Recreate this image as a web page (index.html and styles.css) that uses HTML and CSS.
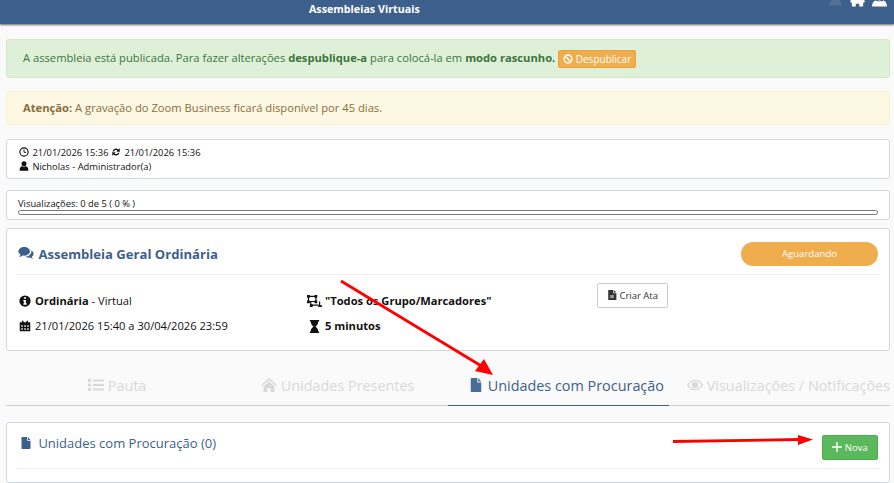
FILE: index.html
```html
<!DOCTYPE html>
<html lang="pt-BR">
<head>
<meta charset="utf-8">
<title>Assembleias Virtuais</title>
<link rel="stylesheet" href="styles.css">
</head>
<body>
<header class="topbar">
  <div class="topbar-title">Assembleias Virtuais</div>
  <div class="topbar-icons">
    <svg class="ti dim" viewBox="0 0 16 16"><path d="M8 1l7.500 14H.5z"/></svg>
    <svg class="ti" viewBox="0 0 16 16"><path d="M8 5l8 5-1 2h-1v4H9.800v-3H6.200v3H2v-4H1l-1-2z"/></svg>
    <svg class="ti" viewBox="0 0 16 16"><circle cx="8" cy="5.500" r="4"/><path d="M0 16c0-4 2-6 4-6.500 2 1.300 6 1.300 8 0 2 .5 4 2.500 4 6.500z"/></svg>
  </div>
</header>
<main class="page">
  <div class="alert alert-ok">A assembleia está publicada. Para fazer alterações <b>despublique-a</b> para colocá-la em <b>modo rascunho.</b> <button class="btn-unpub"><svg class="i10" viewBox="0 0 16 16"><circle cx="8" cy="8" r="6.300" fill="none" stroke="#fff" stroke-width="2.300"/><path d="M3.500 3.500l9 9" stroke="#fff" stroke-width="2.300"/></svg> Despublicar</button></div>
  <div class="alert alert-warn"><b>Atenção:</b> A gravação do Zoom Business ficará disponível por 45 dias.</div>

  <section class="card meta">
    <div class="meta-row"><svg class="i10 meta-icon" viewBox="0 0 16 16"><circle cx="8" cy="8" r="6.600" fill="none" stroke="#111" stroke-width="1.800"/><path d="M8 4v4.500h3.500" fill="none" stroke="#111" stroke-width="1.500"/></svg> 21/01/2026 15:36 <svg class="i10 meta-icon" viewBox="0 0 16 16"><path d="M2.500 7a5.700 5.700 0 0 1 9.500-3l2-2v5.500H8.500l2-2A3.600 3.600 0 0 0 4.800 7zM13.500 9a5.700 5.700 0 0 1-9.500 3l-2 2V8.500h5.500l-2 2a3.600 3.600 0 0 0 5.700-1.500z" fill="#111"/></svg> 21/01/2026 15:36</div>
    <div class="meta-row"><svg class="i10 meta-icon" viewBox="0 0 16 16"><circle cx="8" cy="4.500" r="4"/><path d="M1 15.500c0-5 2-7 4-7 1 1 5 1 6 0 2 0 4 2 4 7z"/></svg> Nicholas - Administrador(a)</div>
  </section>

  <section class="card views">
    <div class="views-label">Visualizações: 0 de 5 ( 0 % )</div>
    <div class="progress"></div>
  </section>

  <section class="card assembly">
    <div class="assembly-head">
      <h1 class="assembly-title"><svg class="i16 title-icon" viewBox="0 0 18 16"><path d="M7 1c3.600 0 6.500 2.300 6.500 5S10.600 11 7 11c-.7 0-1.300-.1-1.900-.2C4 11.700 2.700 12.300 1.200 12.500c.8-.8 1.300-1.700 1.500-2.800C1.100 8.800.300 7.500.300 6 .3 3.300 3.400 1 7 1z"/><path d="M14.700 4.800c1.800.8 3 2.300 3 4 0 1.300-.7 2.500-2 3.300.2 1 .7 1.900 1.400 2.600-1.300-.2-2.500-.7-3.500-1.500-.5.100-1.100.2-1.600.2-1.600 0-3-.5-4.100-1.300 4 .100 7.300-2.500 7.300-6 0-.4-.2-.8-.5-1.300z"/></svg> Assembleia Geral Ordinária</h1>
      <span class="status">Aguardando</span>
    </div>
    <div class="assembly-body">
      <div class="facts">
        <div class="fact"><svg class="i12" viewBox="0 0 16 16"><circle cx="8" cy="8" r="7.500" fill="#111"/><path d="M6.500 3h3v2h-3zM5.800 6.500h3.400V11h1v2H5.800v-2h1V8.500h-1z" fill="#fff"/></svg> <span><b>Ordinária</b> - Virtual</span></div>
        <div class="fact"><svg class="i12" viewBox="0 0 16 16"><path d="M1 3h3V1h2v2h4V1h2v2h3v12H1z" fill="#111"/><path d="M3 7h2v2H3zM7 7h2v2H7zM11 7h2v2h-2zM3 11h2v2H3zM7 11h2v2H7zM11 11h2v2h-2z" fill="#fff"/></svg> <span>21/01/2026 15:40 a 30/04/2026 23:59</span></div>
      </div>
      <div class="facts facts-b">
        <div class="fact"><svg class="i14" viewBox="0 0 16 14"><path d="M1.500 1.500h8v5.500h-8zM4 7v4h8.500M13.500 7v5" fill="none" stroke="#111" stroke-width="1.300"/><path d="M0 0h3v3H0zM8 0h3v3H8zM0 6h3v3H0zM8 6h3v3H8zM3 10h3v3H3zM12 11h4v2h-4z"/></svg> <b>"Todos os Grupo/Marcadores"</b></div>
        <div class="fact"><svg class="i14" viewBox="0 0 16 14"><path d="M3 0h10v1.500h-1C12 5 10 6 9 7c1 1 3 2 3 5.500h1V14H3v-1.500h1C4 9 6 8 7 7 6 6 4 5 4 1.500H3z"/></svg> <b>5 minutos</b></div>
      </div>
      <button class="btn-ata"><svg class="i10" viewBox="0 0 14 16"><path d="M1 0h8v5h5v11H1z"/><path d="M10 0l4 4h-4z"/><path d="M4 8h6v5H4z" fill="#999"/></svg> Criar Ata</button>
    </div>
  </section>

  <nav class="tabs">
    <a class="tab tab-1"><svg class="i16" viewBox="0 0 16 14"><path d="M0 1h3v3H0zM0 5.500h3v3H0zM0 10h3v3H0zM5 1.500h11v2H5zM5 6h11v2H5zM5 10.500h11v2H5z"/></svg> Pauta</a>
    <a class="tab tab-2"><svg class="i16" viewBox="0 0 16 14"><path d="M8 0l8 7-1 1-7-6-7 6-1-1zM2.500 8.200L8 3.500l5.500 4.700V14H9.500v-4h-3v4h-4z"/></svg> Unidades Presentes</a>
    <a class="tab tab-3 active"><svg class="i16" viewBox="0 0 12 16"><path d="M1 0h6.500v5H12v10a1 1 0 0 1-1 1H1a1 1 0 0 1-1-1V1a1 1 0 0 1 1-1z"/><path d="M8.500 0L12 4H8.500z"/></svg> Unidades com Procuração</a>
    <a class="tab tab-4"><svg class="i16" viewBox="0 0 18 12"><path d="M9 0c4 0 7.300 2.500 9 6-1.700 3.500-5 6-9 6s-7.300-2.500-9-6c1.700-3.500 5-6 9-6zm0 1.500C6 1.500 3.300 3.200 1.800 6 3.300 8.800 6 10.500 9 10.500s5.700-1.700 7.200-4.500C14.700 3.200 12 1.500 9 1.500z"/><circle cx="9" cy="6" r="3.500"/></svg> Visualizações / Notificações</a>
  </nav>

  <section class="card list">
    <div class="list-head">
      <h2 class="list-title"><svg class="i12 doc" viewBox="0 0 12 16"><path d="M1 0h6.500v5H12v10a1 1 0 0 1-1 1H1a1 1 0 0 1-1-1V1a1 1 0 0 1 1-1z"/><path d="M8.500 0L12 4H8.500z"/></svg> Unidades com Procuração (0)</h2>
      <button class="btn-new"><svg class="i10" viewBox="0 0 10 10"><path d="M4.300 0h1.400v4.300H10v1.400H5.700V10H4.300V5.700H0V4.300h4.300z" fill="#fff"/></svg> Nova</button>
    </div>
  </section>
</main>
<svg class="annotations" viewBox="0 0 894 483" aria-hidden="true">
  <path d="M341 281L483 367" stroke="#f00" stroke-width="2.800" fill="none"/>
  <path d="M493 375L475 371L484 359z" fill="#f00"/>
  <path d="M673 441.500L800 439.500" stroke="#f00" stroke-width="2.800" fill="none"/>
  <path d="M813 439.500L798 435L798 445z" fill="#f00"/>
</svg>
</body>
</html>
```
FILE: styles.css
```css
* { box-sizing: border-box; }
html, body { margin: 0; height: 483px; overflow: hidden; }
body { background: #fafafa; font-family: "Open Sans", "DejaVu Sans", sans-serif; font-size: 11px; color: #111; position: relative; }
svg { fill: currentColor; flex: none; vertical-align: -1px; }
.i10 { width: 10px; height: 10px; }
.i12 { width: 12px; height: 12px; }
.i14 { width: 15px; height: 13px; }
.i16 { width: 16px; height: 14px; }

.topbar { height: 24px; background: #3d5f8c; box-shadow: 0 1px 2px rgba(0,0,0,.6); display: flex; position: relative; color: #fff; overflow: hidden; }
.topbar-title { margin-left: 309px; padding-top: 2px; font-size: 10.700px; font-weight: 700; line-height: 15px; height: 17px; }
.topbar-icons { margin-left: auto; display: flex; gap: 7px; padding-right: 7px; margin-top: -9px; height: 16px; }
.ti { width: 15px; height: 16px; }
.ti.dim { color: #566f95; }

.page { padding: 15px 4px 0 6px; display: flex; flex-direction: column; }
.alert { border: 1px solid; border-radius: 3px; font-size: 11.200px; padding: 0 16px; white-space: nowrap; }
.alert-ok { height: 39px; background: #dff0d8; border-color: #d6e9c6; color: #3c763d; line-height: 36px; }
.alert-warn { height: 34px; margin-top: 13px; background: #fcf8e3; border-color: #faf2cc; color: #8a6d3b; line-height: 32px; }
.btn-unpub { width: 78px; height: 18px; padding: 0; background: #f0ad4e; border: 1px solid #eea236; border-radius: 2px; color: #fff; font: 10px/14px "Open Sans", sans-serif; vertical-align: middle; margin-top: -1px; }

.card { background: #fff; border: 1px solid #d2d6de; border-radius: 3px; }
.meta { margin-top: 14px; height: 40px; padding: 6px 12px; font-size: 9.400px; line-height: 14px; }
.meta-icon { margin-right: 1px; }
.views { margin-top: 11px; height: 30px; padding: 6px 12px 0 11px; font-size: 9.350px; }
.views-label { line-height: 13px; }
.progress { height: 5px; border: 1px solid #777; border-radius: 3px; background: #fff; width: 860px; }

.assembly { margin-top: 8px; height: 123px; padding: 0 11px; }
.assembly-head { height: 46px; border-bottom: 1px solid #eee; display: flex; align-items: center; justify-content: space-between; padding-top: 4px; }
.assembly-title { margin: 0; font-size: 13.100px; font-weight: 700; color: #3d5f8c; }
.title-icon { margin-right: 1px; }
.status { width: 137px; height: 24px; border-radius: 12px; background: #f0ad4e; color: #fff; font-size: 9.600px; line-height: 24px; text-align: center; }
.assembly-body { display: flex; align-items: flex-start; position: relative; padding-top: 8px; }
.facts { width: 288px; padding: 9px 0 0 1px; display: flex; flex-direction: column; gap: 7px; }
.facts-b { width: 291px; }
.fact { display: flex; align-items: center; gap: 3px; font-size: 11.150px; line-height: 18px; }
.facts:first-child .fact { gap: 4px; }
.btn-ata { width: 71px; height: 25px; background: #fff; border: 1px solid #ccc; border-radius: 2px; font: 9.500px "Open Sans", sans-serif; color: #333; padding: 0; }

.tabs { margin-top: 11px; height: 44px; border-bottom: 1px solid #c9cdd4; display: flex; font-size: 14.400px; color: #d9d9d9; position: relative; }
.tab { display: block; padding-top: 14px; line-height: 20px; white-space: nowrap; }
.tab-1 { margin-left: 82px; width: 173px; }
.tab-2 { width: 187px; }
.tab-3 { width: 221px; padding-left: 20px; margin-bottom: -1px; color: #3d5f8c; border-bottom: 1px solid #3d5f8c; height: 44px; }
.tab-3 svg { color: #4a6c9b; }
.tab-4 { padding-left: 18px; }

.list { margin-top: 16px; height: 61px; padding: 0 11px; }
.list-head { height: 46px; border-bottom: 1px solid #eee; display: flex; align-items: flex-start; justify-content: space-between; }
.list-title { margin: 0; padding: 12px 0 0 2px; font-size: 13px; font-weight: 400; line-height: 17px; color: #3d5f8c; }
.list-title svg { margin-right: 3px; }
.doc { color: #3d5f8c; }
.btn-new { margin-top: 12px; width: 56px; height: 25px; background: #5cb85c; border: 1px solid #4cae4c; border-radius: 2px; color: #fff; font: 9.500px "Open Sans", sans-serif; padding: 0; }

.annotations { position: absolute; left: 0; top: 0; width: 894px; height: 483px; pointer-events: none; }
```
